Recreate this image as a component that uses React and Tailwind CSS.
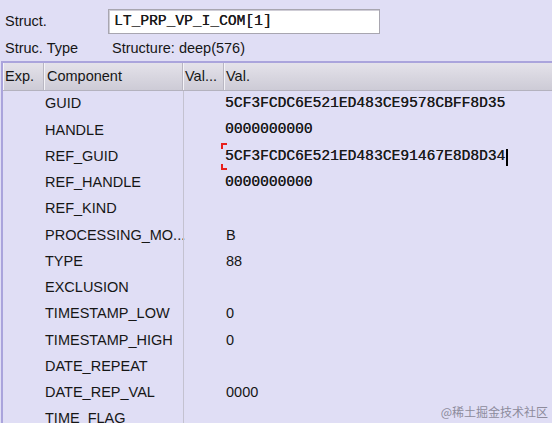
import React from "react";

const rows = [
  ["GUID", "5CF3FCDC6E521ED483CE9578CBFF8D35", true],
  ["HANDLE", "0000000000", true],
  ["REF_GUID", "5CF3FCDC6E521ED483CE91467E8D8D34", true, true],
  ["REF_HANDLE", "0000000000", true],
  ["REF_KIND", "", false],
  ["PROCESSING_MO...", "B", false],
  ["TYPE", "88", false],
  ["EXCLUSION", "", false],
  ["TIMESTAMP_LOW", "0", false],
  ["TIMESTAMP_HIGH", "0", false],
  ["DATE_REPEAT", "", false],
  ["DATE_REP_VAL", "0000", false],
  ["TIME_FLAG", "", false],
];

const sans = "font-['Liberation_Sans',Arial,sans-serif]";
const mono = "font-['Liberation_Mono','Courier_New',monospace]";

export default function App() {
  return (
    <div className={`w-[552px] h-[423px] overflow-hidden bg-[#e0def5] text-[14.5px] text-[#161616] relative ${sans}`}>
      <div className="h-[61px] pt-[9px]">
        <div className="flex items-center h-[25px]">
          <div className="w-[108px] pl-[5px] pt-[1px]">Struct.</div>
          <div className={`w-[272px] h-[25px] bg-white border border-[#a8a6b0] shadow-[inset_1px_1px_0_#cfcdd6] flex items-center pl-[5px] text-[14.6px] ${mono} text-[#1a1a1a] [text-shadow:0.25px_0_0_#1a1a1a]`}>
            LT_PRP_VP_I_COM[1]
          </div>
        </div>
        <div className="flex items-center h-[26px] mt-[2px]">
          <div className="w-[108px] pl-[5px]">Struc. Type</div>
          <div className="pl-[4px]">Structure: deep(576)</div>
        </div>
      </div>
      <div className="border-t-2 border-l-2 border-[#aaa4dc] ml-[1px]">
        <div className="flex h-[28px] bg-gradient-to-b from-[#e4e2ea] to-[#cdcbd6] border-b border-[#b4b2be]">
          <div className="w-[41px] pl-[2px] flex items-center border-r border-[#b9b7c2] shadow-[inset_1px_0_0_#f4f3f8]">Exp.</div>
          <div className="w-[139px] pl-[3px] flex items-center border-r border-[#b9b7c2] shadow-[inset_1px_0_0_#f4f3f8]">Component</div>
          <div className="w-[41px] pl-[2px] flex items-center border-r border-[#b9b7c2] shadow-[inset_1px_0_0_#f4f3f8]">Val...</div>
          <div className="flex-1 pl-[2px] flex items-center shadow-[inset_1px_0_0_#f4f3f8]">Val.</div>
        </div>
        <div className="flex flex-col">
          {rows.map(([name, val, isMono, active]) => (
            <div key={name} className="flex h-[26.25px] shrink-0 items-center">
              <div className="w-[41px]"></div>
              <div className="w-[139px] pl-[1px] whitespace-nowrap">{name}</div>
              <div className="w-[1px] self-stretch bg-[#c4c2d0]"></div>
              <div className="w-[41px]"></div>
              <div className="relative self-stretch flex items-center">
                <span className={`whitespace-nowrap ${isMono ? `${mono} text-[14.6px] text-[#1a1a1a] [text-shadow:0.25px_0_0_#1a1a1a]` : "pl-[1px]"}`}>
                  {val}
                </span>
                {active && (
                  <>
                    <span className="absolute left-[-4px] top-[-1px] w-[6px] h-[6px] border-l-2 border-t-2 border-[#e8201c]"></span>
                    <span className="absolute left-[-4px] bottom-[0px] w-[6px] h-[6px] border-l-2 border-b-2 border-[#e8201c]"></span>
                    <span className="absolute right-[-3px] top-[5px] w-[2px] h-[17px] bg-black"></span>
                  </>
                )}
              </div>
            </div>
          ))}
        </div>
      </div>
      <div className="absolute right-[4px] bottom-[2px] text-[12px] text-[#8d8b9c] font-['Noto_Sans_CJK_SC',sans-serif]">
        @稀土掘金技术社区
      </div>
    </div>
  );
}
